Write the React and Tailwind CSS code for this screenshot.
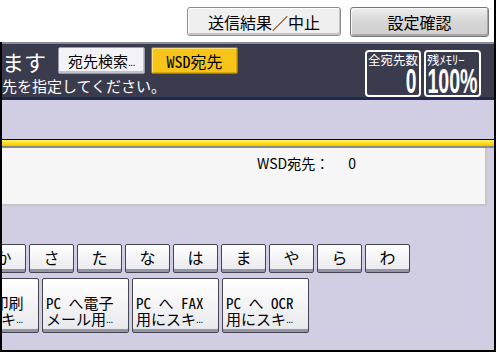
const MONO = "font-['Noto_Sans_Mono_CJK_JP','Noto_Sans_CJK_JP',sans-serif]";

function Dots({ className = "" }) {
  return (
    <span className={"font-['Liberation_Sans',sans-serif] text-[10px] leading-none tracking-[-0.5px] " + className}>...</span>
  );
}

export default function App() {
  const kana = ["か", "さ", "た", "な", "は", "ま", "や", "ら", "わ"];
  const pcs = [
    ["PC へ印刷", "用にスキ"],
    ["PC へ電子", "メール用"],
    ["PC へ FAX", "用にスキ"],
    ["PC へ OCR", "用にスキ"],
  ];
  return (
    <div className="w-[496px] h-[352px] bg-black flex flex-col pr-[2px] pb-[2px] overflow-hidden font-['Noto_Sans_CJK_JP',sans-serif] text-black">
      {/* header */}
      <div className="h-[42px] shrink-0 bg-white flex justify-end items-start pt-[7px] pr-[5px] gap-[9px]">
        <div className="w-[154px] h-[29px] rounded-[3px] border border-[#8c8c8c] bg-[#efefef] shadow-[inset_1px_1px_0_#ffffff,inset_-1px_-2px_0_#c4c4c4] flex items-center justify-center text-[16px] leading-none">
          送信結果／中止
        </div>
        <div className="w-[139px] h-[30px] rounded-[3px] border border-[#777777] bg-gradient-to-b from-[#eeeeee] via-[#d6d6d6] to-[#cfcfcf] shadow-[inset_1px_1px_0_#f8f8f8,inset_-1px_-2px_0_#a8a8a8] flex items-center justify-center text-[16px] leading-none">
          設定確認
        </div>
      </div>

      <div className="flex-1 flex flex-col pl-[2px] min-h-0">
        {/* dark bar */}
        <div className="h-[58px] shrink-0 bg-[#3b3b4e] border-t-2 border-t-[#8c8c9a] border-b-[3px] border-b-[#1e2a52] flex">
          <div className="flex-1 flex flex-col">
            <div className="flex items-center h-[27px] mt-[3px]">
              <span className="text-white text-[22px] leading-none">ます</span>
              <div className="ml-[12px] w-[87px] h-[27px] rounded-[2px] border border-[#9a9aa6] bg-[#f3f3f7] shadow-[inset_-1px_-2px_0_#c2c2cc] flex items-center justify-center text-[15px] leading-none">
                <span>宛先検索</span>
                <Dots className="self-end mb-[5px]" />
              </div>
              <div className={"ml-[6px] w-[87px] h-[27px] rounded-[2px] border border-[#8a7a2a] bg-[#f7c51a] shadow-[inset_1px_1px_0_#fbe07a,inset_-1px_-1px_0_#d8a800] flex items-center justify-center text-[16px] leading-none " + MONO}>
                WSD宛先
              </div>
            </div>
            <div className="text-white text-[15px] leading-[20px] mt-[2px]">先を指定してください。</div>
          </div>
          <div className="flex gap-[3px] pt-[6px] pr-[13px]">
            <div className="w-[56px] h-[47px] border-2 border-white rounded-[4px] flex flex-col text-white">
              <div className="text-[12.5px] leading-[14px] pl-[1px] pt-[1px] whitespace-nowrap">全宛先数</div>
              <div className="flex-1 flex justify-end items-end pr-[3px] pb-[1px]">
                <span className="inline-block shrink-0 origin-bottom-right scale-x-[0.55] font-['Liberation_Sans',sans-serif] font-bold text-[35px] leading-[28px] whitespace-nowrap">0</span>
              </div>
            </div>
            <div className="w-[57px] h-[47px] border-2 border-white rounded-[4px] flex flex-col text-white">
              <div className="text-[12.5px] leading-[14px] pl-[1px] pt-[1px] whitespace-nowrap">残ﾒﾓﾘｰ</div>
              <div className="flex-1 flex justify-end items-end pr-[1px] pb-[1px]">
                <span className="inline-block shrink-0 origin-bottom-right scale-x-[0.56] font-['Liberation_Sans',sans-serif] font-bold text-[35px] leading-[28px] whitespace-nowrap">100%</span>
              </div>
            </div>
          </div>
        </div>

        {/* lavender area */}
        <div className="flex-1 bg-[#d1cde3] flex flex-col pt-[39px] overflow-hidden">
          <div className="h-[9px] shrink-0 border-t border-t-black bg-gradient-to-b from-[#fff46a] via-[#ffe000] to-[#f2c400] border-b-2 border-b-[#8a8a8a]" />
          <div className="h-[58px] shrink-0 mr-[7px] bg-[#f6f6f6] border-r-2 border-b-2 border-[#c6c6c6] pl-[255px] pt-[5px] text-[14px] leading-[20px]">
            WSD宛先：<span className="ml-[19px]">0</span>
          </div>

          <div className="flex gap-[3px] mt-[38px] ml-[-21px] h-[29px] shrink-0">
            {kana.map((k) => (
              <div
                key={k}
                className="w-[45px] h-[29px] shrink-0 rounded-[2px] border border-[#454552] bg-gradient-to-b from-white to-[#e8e8ec] shadow-[inset_0_-3px_0_#9494a4] flex items-center justify-center pb-[3px] text-[16px] leading-none"
              >
                {k}
              </div>
            ))}
          </div>

          <div className="flex gap-[3px] mt-[5px] ml-[-50px] h-[55px] shrink-0">
            {pcs.map(([a, b]) => (
              <div
                key={a}
                className={"w-[87px] h-[55px] shrink-0 rounded-[2px] border border-[#454552] bg-gradient-to-b from-white to-[#e8e8ec] shadow-[inset_0_-3px_0_#9494a4] flex flex-col justify-end pl-[3px] pb-[5px] text-[15px] leading-[16px] whitespace-nowrap " + MONO}
              >
                <div>{a}</div>
                <div className="flex items-end">
                  <span>{b}</span>
                  <Dots className="mb-[2px]" />
                </div>
              </div>
            ))}
          </div>
        </div>
      </div>
    </div>
  );
}
